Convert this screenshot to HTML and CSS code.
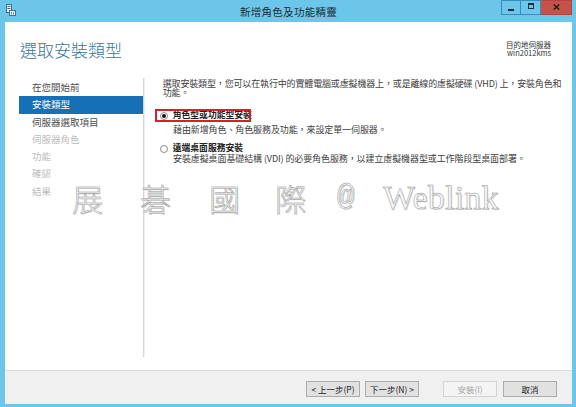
FILE: index.html
```html
<!DOCTYPE html>
<html lang="zh-Hant">
<head>
<meta charset="utf-8">
<title>新增角色及功能精靈</title>
<link rel="stylesheet" href="styles.css">
</head>
<body>
<div class="window">
  <div class="titlebar">
    <svg class="app-icon" viewBox="0 0 11 12" width="11" height="12">
      <rect x="1.5" y="0.5" width="5" height="8" fill="#eaf4fa" stroke="#3f6f8c"/>
      <rect x="2.5" y="2" width="3" height="1" fill="#3f6f8c"/>
      <rect x="2.5" y="4" width="3" height="1" fill="#3f6f8c"/>
      <rect x="4.5" y="6.5" width="6" height="5" fill="#f4f8fb" stroke="#3f6f8c"/>
      <rect x="6" y="8" width="1" height="2.5" fill="#6a8fa6"/>
      <rect x="8" y="8" width="1" height="2.5" fill="#6a8fa6"/>
    </svg>
    <div class="title">新增角色及功能精靈</div>
    <div class="controls">
      <div class="ctl ctl-min"><span class="glyph-min"></span></div>
      <div class="ctl ctl-max"><span class="glyph-max"></span></div>
      <div class="ctl ctl-close">
        <svg viewBox="0 0 7 6" width="7" height="6"><path d="M0.8 0.5 L6.2 5.5 M6.2 0.5 L0.8 5.5" stroke="#2a1f1f" stroke-width="1.6"/></svg>
      </div>
    </div>
  </div>
  <div class="frame">
    <div class="content">
      <div class="header">
        <h1 class="heading">選取安裝類型</h1>
        <div class="dest">
          <div>目的地伺服器</div>
          <div>win2012kms</div>
        </div>
      </div>
      <div class="body">
        <ul class="nav">
          <li class="nav-item">在您開始前</li>
          <li class="nav-item is-active">安裝類型</li>
          <li class="nav-item">伺服器選取項目</li>
          <li class="nav-item is-disabled">伺服器角色</li>
          <li class="nav-item is-disabled">功能</li>
          <li class="nav-item is-disabled">確認</li>
          <li class="nav-item is-disabled">結果</li>
        </ul>
        <div class="sep"></div>
        <div class="main">
          <p class="desc">選取安裝類型，您可以在執行中的實體電腦或虛擬機器上，或是離線的虛擬硬碟 (VHD) 上，安裝角色和功能。</p>
          <div class="option option-first">
            <div class="opt-row">
              <span class="radio is-checked"></span>
              <span class="opt-label">角色型或功能型安裝</span>
              <span class="highlight"></span>
            </div>
            <p class="opt-sub opt-sub-first">藉由新增角色、角色服務及功能，來設定單一伺服器。</p>
          </div>
          <div class="option option-second">
            <div class="opt-row">
              <span class="radio"></span>
              <span class="opt-label">遠端桌面服務安裝</span>
            </div>
            <p class="opt-sub opt-sub-second">安裝虛擬桌面基礎結構 (VDI) 的必要角色服務，以建立虛擬機器型或工作階段型桌面部署。</p>
          </div>
        </div>
      </div>
      <div class="watermark">
        <span class="wm wm-1">展</span><span class="wm wm-2">碁</span><span class="wm wm-3">國</span><span class="wm wm-4">際</span><span class="wm wm-at">@</span><span class="wm wm-latin">Weblink</span>
      </div>
    </div>
    <div class="footer">
      <button class="btn">&lt; 上一步(P)</button>
      <button class="btn btn-next">下一步(N) &gt;</button>
      <button class="btn btn-install" disabled>安裝(I)</button>
      <button class="btn btn-cancel">取消</button>
    </div>
  </div>
</div>
</body>
</html>
```

FILE: styles.css
```css
* { box-sizing: border-box; margin: 0; padding: 0; }
html, body { width: 576px; height: 407px; overflow: hidden; }
body {
  background: #6cc6e9;
  font-family: "Noto Sans CJK TC", "Noto Sans", sans-serif;
  color: #333;
}
.window { display: flex; flex-direction: column; height: 407px; }

.titlebar {
  height: 22px;
  flex: none;
  display: grid;
  grid-template-columns: 1fr auto 1fr;
  align-items: start;
  padding: 0 4px 0 5px;
}
.app-icon { margin-top: 4px; }
.title {
  font-size: 10.5px;
  line-height: 24px;
  color: #1e2b33;
  letter-spacing: 0.3px;
}
.controls { display: flex; justify-self: end; }
.ctl {
  height: 15px;
  width: 20px;
  border: 1px solid #3b8cbc;
  display: flex;
  justify-content: center;
}
.ctl-min { align-items: flex-end; padding-bottom: 3px; }
.ctl-max { border-left: none; align-items: flex-start; padding-top: 2px; }
.ctl-close {
  width: 31px;
  border: 1px solid #b2453f;
  border-left: none;
  background: #c8514b;
  align-items: flex-start;
  padding-top: 3px;
}
.glyph-min { width: 6px; height: 2px; background: #15303f; }
.glyph-max { width: 6px; height: 6px; border: 1.5px solid #15303f; border-top-width: 2px; }

.frame {
  flex: 1;
  display: flex;
  flex-direction: column;
  margin: 0 4px 3px 5px;
}
.content {
  flex: 1;
  background: #fff;
  position: relative;
}
.header {
  height: 57px;
  display: flex;
  justify-content: space-between;
  padding: 18px 21px 0 15px;
}
.heading {
  font-size: 17px;
  line-height: 20px;
  font-weight: 300;
  color: #3872a0;
}
.dest {
  margin-top: 1px;
  font-size: 7.5px;
  line-height: 8.2px;
  text-align: right;
  color: #333;
}

.body { display: flex; height: 278px; }
.nav {
  list-style: none;
  width: 138px;
  flex: none;
  padding-left: 14px;
}
.nav-item {
  height: 17.3px;
  line-height: 17.3px;
  padding-left: 13px;
  font-size: 9.5px;
  color: #4a4a4a;
}
.nav-item.is-active { background: #1670b8; color: #fff; }
.nav-item.is-disabled { color: #bcbcbc; }
.sep {
  width: 2px;
  flex: none;
  border-left: 1px solid #d6d6d6;
  border-right: 1px solid #eeeeee;
  margin-top: -1px;
}
.main { flex: 1; padding: 0 2px 0 17.7px; }
.desc {
  font-size: 9px;
  line-height: 9.4px;
  letter-spacing: -0.15px;
  color: #404040;
}
.option-first { margin-top: 12.7px; }
.option-second { margin-top: 9.3px; }
.opt-row {
  position: relative;
  display: flex;
  align-items: center;
  height: 10px;
}
.radio {
  width: 8px;
  height: 8px;
  border: 1px solid #8c8c8c;
  border-radius: 50%;
  margin-left: -2.7px;
  margin-right: 4.7px;
  background: #fff;
  display: flex;
  align-items: center;
  justify-content: center;
}
.radio.is-checked::after {
  content: "";
  width: 4px;
  height: 4px;
  border-radius: 50%;
  background: #111;
}
.opt-label {
  font-size: 8.8px;
  font-weight: 700;
  color: #222;
  line-height: 10px;
  margin-top: -1.5px;
}
.highlight {
  position: absolute;
  left: -8px;
  top: -1.5px;
  width: 96px;
  height: 12.5px;
  border: 2px solid #d2222b;
}
.opt-sub {
  padding-left: 10.3px;
  font-size: 9px;
  line-height: 9.4px;
  letter-spacing: -0.1px;
  color: #404040;
}
.opt-sub-first { margin-top: 4.6px; }
.opt-sub-second { margin-top: 0.3px; }

.watermark {
  position: absolute;
  left: 67px;
  top: 159px;
  display: flex;
  align-items: flex-end;
  color: #f6f6f6;
  -webkit-text-stroke: 0.45px #8e8e8e;
  text-shadow: 1px 1px 0 #dcdcdc;
  pointer-events: none;
}
.wm { display: inline-block; font-size: 31px; line-height: 34px; font-weight: 300; }
.wm-1 { width: 68px; }
.wm-2 { width: 69px; }
.wm-3 { width: 66px; }
.wm-4 { width: 62px; }
.wm-at {
  width: 46px;
  font-family: "Liberation Mono", monospace;
  font-size: 29px;
  font-weight: 400;
}
.wm-latin {
  font-family: "Liberation Serif", serif;
  font-size: 34px;
  font-weight: 400;
  letter-spacing: 0.2px;
}

.footer {
  height: 34px;
  flex: none;
  background: #f0f0f0;
  border-top: 1px solid #dedede;
  display: flex;
  justify-content: flex-end;
  align-items: flex-start;
  padding: 10px 15px 0 0;
}
.btn {
  width: 54px;
  height: 16px;
  border: 1px solid #acacac;
  background: #e1e1e1;
  font-family: "Noto Sans CJK TC", "Noto Sans", sans-serif;
  font-size: 8.5px;
  line-height: 14px;
  color: #222;
}
.btn-next { margin-left: 5px; }
.btn-install {
  margin-left: 24px;
  background: #f4f4f4;
  border-color: #d3d3d3;
  color: #a6a6a6;
}
.btn-cancel { margin-left: 6px; }
```
